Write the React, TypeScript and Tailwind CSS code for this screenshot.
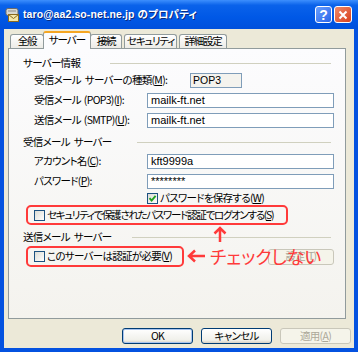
import React from "react";

function Check({ checked }: { checked?: boolean }) {
  return (
    <span className="w-[11px] h-[11px] shrink-0 border border-[#1c5180] bg-[linear-gradient(135deg,#dcdcd5,#ffffff)] flex items-center justify-center">
      {checked && (
        <svg width="9" height="9" viewBox="0 0 9 9">
          <path d="M1.5 4.2 L3.6 6.5 L7.6 1.8" fill="none" stroke="#21a121" strokeWidth="1.9" />
        </svg>
      )}
    </span>
  );
}

function Header({ text, lineLeft }: { text: React.ReactNode; lineLeft: string }) {
  return (
    <div className="h-[16px] flex items-center pl-[14px] pr-[14px]">
      <span className="shrink-0">{text}</span>
      <div className={`flex-1 border-t border-[#d0d0bf] ${lineLeft}`} />
    </div>
  );
}

function Field({ label, value }: { label: React.ReactNode; value: string }) {
  return (
    <div className="h-[18px] flex items-center pl-[25px] pr-[11px]">
      <span className="w-[113px] shrink-0 whitespace-nowrap">{label}</span>
      <div className="flex-1 h-[15px] border border-[#7f9db9] bg-white flex items-center pl-[3px] font-['Liberation_Sans',sans-serif] text-[11px] tracking-normal">
        {value}
      </div>
    </div>
  );
}

function Btn({ children, disabled, def }: { children: React.ReactNode; disabled?: boolean; def?: boolean }) {
  return (
    <div
      className={`h-[16px] w-[71px] rounded-[3px] border flex items-center justify-center ${
        disabled
          ? "border-[#c9c7ba] bg-[#f5f4ea] text-[#aca899]"
          : "border-[#003c74] bg-[linear-gradient(180deg,#ffffff,#f0f0ea_80%,#d6d0c5)] text-black"
      } ${def ? "shadow-[inset_0_0_0_1px_#a8c4ef]" : ""}`}
    >
      {children}
    </div>
  );
}

const tab =
  "h-[14px] border border-b-0 border-[#919b9c] rounded-t-[3px] bg-[linear-gradient(180deg,#ffffff,#ecebe6)] flex items-center justify-center tracking-[-1.2px]";

export default function App() {
  return (
    <div className="w-[358px] h-[352px] bg-[#0452e0] flex flex-col font-['Noto_Sans_CJK_JP',sans-serif] text-[10.5px] tracking-[-0.7px] leading-none text-black [font-feature-settings:'palt']">
      {/* title bar */}
      <div className="h-[29px] shrink-0 flex items-center pl-[5px] pr-[6px] bg-[linear-gradient(180deg,#3d8ffd_0%,#0a62ea_18%,#0058e6_60%,#0050dc_100%)]">
        <svg width="15" height="14" viewBox="0 0 15 14" className="shrink-0">
          <rect x="1" y="0.5" width="12" height="7" rx="2" fill="#d8d8d0" stroke="#6b6b6b" />
          <rect x="3" y="2.5" width="8" height="1" fill="#8a8a8a" />
          <rect x="3.5" y="6.5" width="10" height="7" fill="#f4e7a8" stroke="#8a6a20" />
          <path d="M3.5 6.5 L8.5 10.5 L13.5 6.5" fill="none" stroke="#8a6a20" />
        </svg>
        <span className="ml-[3px] text-white font-bold text-[10.5px] tracking-[0.1px] font-['Liberation_Sans','Noto_Sans_CJK_JP',sans-serif] [text-shadow:1px_1px_0_#0a2a80]">
          taro@aa2.so-net.ne.jp のプロパティ
        </span>
        <div className="ml-auto flex gap-[2px] items-center">
          <div className="w-[17px] h-[17px] rounded-[3px] border border-white bg-[linear-gradient(135deg,#6aa0ff,#2a64e8)] flex items-center justify-center text-white font-bold text-[14px] tracking-normal font-['Liberation_Sans',sans-serif]">
            ?
          </div>
          <div className="w-[18px] h-[17px] rounded-[3px] border border-white bg-[linear-gradient(135deg,#f08a6a,#d8401c)] flex items-center justify-center">
            <svg width="10" height="10" viewBox="0 0 10 10">
              <path d="M1.5 1.5 L8.5 8.5 M8.5 1.5 L1.5 8.5" stroke="white" strokeWidth="2" />
            </svg>
          </div>
        </div>
      </div>

      {/* dialog body */}
      <div className="flex-1 mx-[4px] mb-[4px] bg-[#ece9d8] flex flex-col">
        {/* tabs */}
        <div className="h-[18px] mt-[1px] flex items-end pl-[6px] relative z-10">
          <div className={`${tab} w-[34px]`}>全般</div>
          <div className="h-[18px] w-[48px] -mx-[1px] border border-b-0 border-[#919b9c] border-t-[2px] border-t-[#f5a623] rounded-t-[3px] bg-[#fcfcfe] flex items-center justify-center relative -mb-px pb-px tracking-[-1px]">サーバー</div>
          <div className={`${tab} w-[32px]`}>接続</div>
          <div className={`${tab} w-[53px] ml-[2px]`}>セキュリティ</div>
          <div className={`${tab} w-[48px] ml-[2px]`}>詳細設定</div>
        </div>

        {/* panel */}
        <div className="h-[271px] ml-[4px] mr-[8px] border border-[#919b9c] bg-[linear-gradient(180deg,#fcfcfe,#f4f3ee)] flex flex-col pt-[6px] relative">
          <Header text="サーバー情報" lineLeft="ml-[30px]" />
          <div className="h-[18px] flex items-center pl-[25px]">
            <span className="w-[156px] shrink-0 whitespace-nowrap">
              受信メール<span className="ml-[4px]">サーバーの種類(<u>M</u>):</span>
            </span>
            <div className="w-[52px] h-[15px] border border-[#7f9db9] bg-[#f4f3ee] flex items-center pl-[2px] font-['Liberation_Sans',sans-serif] tracking-normal">
              POP3
            </div>
          </div>
          <div className="mt-[2px]">
            <Field label={<>受信メール<span className="ml-[3px]">(POP3)(<u>I</u>):</span></>} value="mailk-ft.net" />
          </div>
          <div className="mt-[2px]">
            <Field label={<>送信メール<span className="ml-[3px]">(SMTP)(<u>U</u>):</span></>} value="mailk-ft.net" />
          </div>
          <div className="mt-[5px]">
            <Header text={<>受信メール<span className="ml-[4px]">サーバー</span></>} lineLeft="ml-[26px]" />
          </div>
          <div className="mt-[2px]">
            <Field label={<>アカウント名(<u>C</u>):</>} value="kft9999a" />
          </div>
          <div className="mt-[2px]">
            <Field label={<>パスワード(<u>P</u>):</>} value="********" />
          </div>
          <div className="mt-[1px] h-[14px] flex items-center pl-[138px] gap-[2px]">
            <Check checked />
            <span className="whitespace-nowrap">パスワードを保存する(<u>W</u>)</span>
          </div>
          <div className="h-[20px] ml-[17px] w-[262px] border-[2.5px] border-[#ff3a3a] rounded-[5px] flex items-center pl-[6px] gap-[2px]">
            <Check />
            <span className="whitespace-nowrap tracking-[-1.3px]">セキュリティで保護されたパスワード認証でログオンする(<u>S</u>)</span>
          </div>
          <div className="mt-[4px]">
            <Header text={<>送信メール<span className="ml-[4px]">サーバー</span></>} lineLeft="ml-[21px]" />
          </div>
          <div className="mt-[1px] h-[21px] flex items-center pr-[11px]">
            <div className="h-[21px] ml-[17px] w-[158px] border-[2.5px] border-[#ff3a3a] rounded-[5px] flex items-center pl-[6px] gap-[2px]">
              <Check />
              <span className="whitespace-nowrap">このサーバーは認証が必要(<u>V</u>)</span>
            </div>
            <div className="ml-auto w-[66px] h-[16px] rounded-[3px] border border-[#c9c7ba] bg-[#f5f4ea] text-[#aca899] flex items-center justify-center">
              設定(<u>T</u>)
            </div>
          </div>

          {/* annotations */}
          <svg width="16" height="17" viewBox="0 0 16 17" className="absolute left-[203px] top-[177px]">
            <path d="M8 16 L8 2 M2.5 7.5 L8 2 L13.5 7.5" fill="none" stroke="#ff3a3a" strokeWidth="2.5" />
          </svg>
          <div className="absolute left-[178px] top-[198px] flex items-center gap-[4px] text-[#ff3a3a] text-[18px] tracking-normal">
            <svg width="19" height="14" viewBox="0 0 19 14">
              <path d="M18 7 L2 7 M8 1.5 L2 7 L8 12.5" fill="none" stroke="#ff3a3a" strokeWidth="2.5" />
            </svg>
            <span>チェックしない</span>
          </div>
        </div>

        {/* buttons */}
        <div className="mt-[9px] flex justify-end gap-[8px] pr-[3px]">
          <Btn def>OK</Btn>
          <Btn>キャンセル</Btn>
          <Btn disabled>適用(<u>A</u>)</Btn>
        </div>
      </div>
    </div>
  );
}
